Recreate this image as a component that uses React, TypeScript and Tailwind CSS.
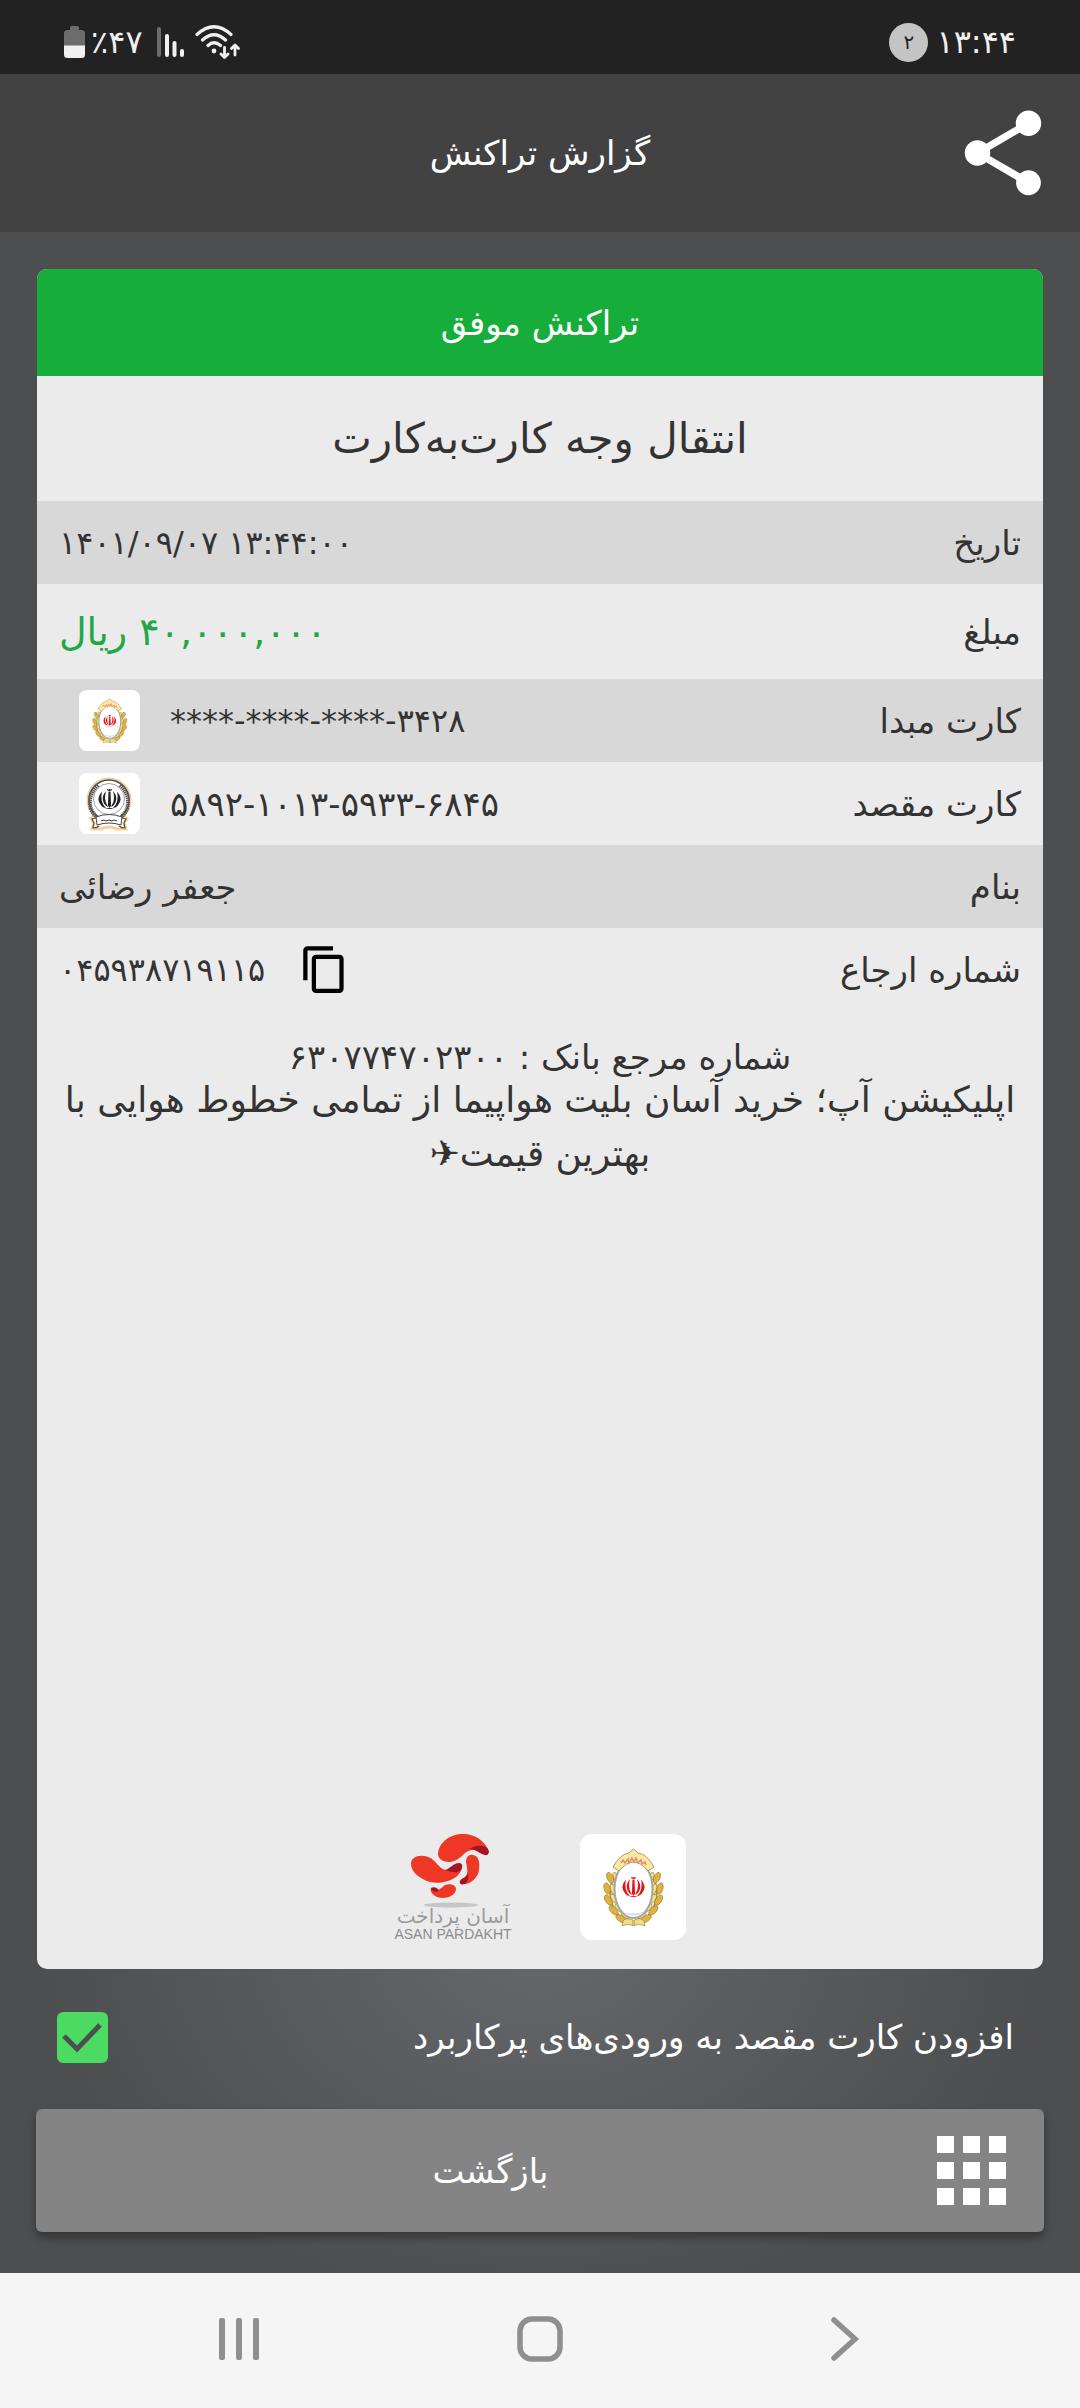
import React, { useState } from "react";
import { MdContentCopy, MdShare } from "react-icons/md";

function BatteryIcon() {
  return (
    <svg viewBox="0 0 21 32" className="h-8 w-[21px]" aria-hidden="true">
      <path d="M6 1.5Q6 0 7.500 0h6Q15 0 15 1.500V4h2.500Q21 4 21 7.500V20H0V7.500Q0 4 3.500 4H6z" fill="#6c6c6c" />
      <path d="M0 19.500h21V28.500Q21 32 17.500 32h-14Q0 32 0 28.500z" fill="#f0f0f0" />
    </svg>
  );
}

function SignalIcon() {
  return (
    <svg viewBox="0 0 28 31" className="h-[31px] w-7" aria-hidden="true">
      <rect x="0" y="0" width="4" height="30" rx="2" fill="#6c6c6c" />
      <rect x="8" y="7" width="4" height="23" rx="2" fill="#f0f0f0" />
      <rect x="15.500" y="14" width="4" height="16" rx="2" fill="#f0f0f0" />
      <rect x="23" y="22" width="4" height="8" rx="2" fill="#f0f0f0" />
    </svg>
  );
}

function WifiIcon() {
  return (
    <svg viewBox="0 0 46 34" className="h-[34px] w-[46px]" fill="none" stroke="#f0f0f0" strokeLinecap="round" aria-hidden="true">
      <path d="M2 9.500Q19 -6 36 9.500M7.500 15Q19 4.500 30.500 15M13 20.500Q19 15 25.500 20.500" strokeWidth="3.200" />
      <circle cx="19" cy="26" r="2.400" fill="#f0f0f0" stroke="none" />
      <path d="M29.500 22.500V32M26 29l3.500 3.500L33 29M40 30v-9.500M36.500 23.500L40 20l3.500 3.500" strokeWidth="2.800" strokeLinejoin="round" />
    </svg>
  );
}

interface EmblemProps {
  color: string;
}

// tulip-shaped "Allah" sign, 24x22 box
function Tulip({ color }: EmblemProps) {
  return (
    <g fill={color}>
      <path d="M11 3.500h2l.6 14L12 20l-1.600-2.500z" />
      <path d="M9 0.500q1.500 1.500 3 .5 1.500 1 3-.5-.5 2.500-3 2.500t-3-2.500z" />
      <path d="M8.500 3Q3 9 6.500 15.500q1.500 2.500 4 3.500-3-5-3-9 0-4 1-7z" />
      <path d="M15.500 3Q21 9 17.500 15.500q-1.500 2.500-4 3.500 3-5 3-9 0-4-1-7z" />
      <path d="M4.500 3.500Q-2.500 11 4 18q2 1.800 4.500 2.200Q2 13.500 4.500 3.500z" />
      <path d="M19.500 3.500Q26.500 11 20 18q-2 1.800-4.500 2.200 6.500-6.700 4-16.700z" />
      <path d="M7.500 21q4.500-2 9 0z" />
    </g>
  );
}

const leaves = [
  [8, 41, -25],
  [5, 52, -15],
  [6, 63, -32],
  [11, 73, -45],
  [18, 81, -58],
];

function MelliLogo({ className }: { className: string }) {
  return (
    <svg viewBox="0 0 106 106" className={className} aria-hidden="true">
      <g transform="translate(24 14)">
        {[0, 1].map((side) => (
          <g key={side} transform={side ? "translate(59 0) scale(-1 1)" : undefined} stroke="#8d7a3a" strokeWidth="0.600">
            <path d="M10 28Q1 50 14 67q6 7 15 9" fill="none" stroke="#a8924a" strokeWidth="2" />
            {leaves.map(([x, y, a]) => (
              <g key={y} transform={`translate(${x} ${y - 12}) rotate(${a})`}>
                <ellipse cx="-2" cy="0" rx="3" ry="5.800" fill="#e3b23c" />
                <ellipse cx="3.500" cy="2" rx="2.400" ry="5.200" fill="#f6e08a" />
              </g>
            ))}
            <path d="M29 72q-7-3-10 1l-1 5q7-3 11 0z" fill="#f0dc86" />
          </g>
        ))}
        <ellipse cx="29.500" cy="41" rx="19" ry="29" fill="#fff" stroke="#a5a5a5" strokeWidth="2" />
        <path d="M18 63q11 5 23 0-11 9-23 0z" fill="#dcdcdc" />
        <path d="M9 19Q16 6 25 5l4.500-4L34 5q9 1 16 14l-6 4Q29.500 5 15 23z" fill="#fae9a4" stroke="#b29b55" strokeWidth="1" />
        <path d="M17 15l2-3 2 3 3-4 1 4 3-5 2 4 2-4 2 5 3-3 1 4 3-2 1 3" fill="none" stroke="#e58b70" strokeWidth="1.500" />
        <g transform="translate(17.500 28)">
          <Tulip color="#e0161b" />
        </g>
      </g>
    </svg>
  );
}

function SepahLogo({ className }: { className: string }) {
  return (
    <svg viewBox="0 0 61 61" className={className} fill="none" aria-hidden="true">
      <circle cx="30" cy="27" r="21.500" stroke="#f6cf9d" strokeWidth="2" />
      <path d="M14 43l-2 3 3 4-2 6h9q8-4 16 0h9l-2-6 3-4-3-3z" fill="#fff" stroke="#f6cf9d" strokeWidth="3" />
      <circle cx="30" cy="27" r="20" fill="#fff" stroke="#4b4b4b" strokeWidth="1.400" />
      <path d="M19 12Q8 22 12 36q2 5 6 8M41 12q11 10 7 24-2 5-6 8" stroke="#555" strokeWidth="4" strokeDasharray="1.500 0.600" />
      <circle cx="30" cy="26" r="15.500" stroke="#777" strokeWidth="0.700" />
      <g transform="translate(18.500 15)">
        <Tulip color="#242424" />
      </g>
      <path d="M17 44q13-5 26 0l-1 8q-12-4-24 0z" fill="#fff" stroke="#444" />
      <path d="M17 45l-4 1 2 4-1 5q4 0 6-2M43 45l4 1-2 4 1 5q-4 0-6-2" stroke="#555" strokeWidth="1.200" />
      <path d="M22 48l3-1 2 1 3-1 3 1 2-1 3 1" stroke="#333" />
    </svg>
  );
}

function AsanPardakhtLogo() {
  return (
    <svg viewBox="0 0 118 106" className="h-[106px] w-[118px] overflow-visible" role="img" aria-label="آسان پرداخت">
      <path d="M44 20C45 8 56 0 69 0c13 0 23 8 26 18-1 3-4 3-7 1-6-4-13-4-18 1-4 4-9 8-15 8-7 0-11-4-11-8z" fill="#ee3724" />
      <path d="M76 15c5-4 13-4 17-1 3 3 2 8-2 7-5-1-9-6-15-6z" fill="#a31621" />
      <path d="M17 30c0-6 6-9 13-8 12 1 14 14 23 14 6 0 8-5 13-6 4 2 1 9-4 13-7 5-18 7-26 5-10-3-19-10-19-18z" fill="#ee3724" />
      <path d="M51 36c5-1 8-7 14-7 4 0 4 4 2 7-4 4-11 2-16 0z" fill="#a31621" />
      <path d="M72 28c0-5 3-8 7-7 6 1 7 8 6 15-1 8-9 14-14 14-6 0-4-4-1-6 5-4 3-10 2-16z" fill="#ee3724" />
      <path d="M66 47c1-3 6-3 8-7 1 3 0 8-3 10-4 1-6 0-5-3z" fill="#a31621" />
      <path d="M37 54c5 6 10 0 14-3 5-2 11 0 11 4 0 6-8 9-13 9-7 0-14-5-12-10z" fill="#ee3724" />
      <path d="M37 54c3-2 7 0 8 3-3 2-8 0-8-3z" fill="#a31621" />
      <ellipse cx="57" cy="71" rx="27" ry="2.500" fill="#c5c6c8" />
      <text x="59" y="89" textAnchor="middle" direction="rtl" fontSize="20" fill="#9a9b9d" fontFamily="DejaVu Sans, sans-serif">آسان پرداخت</text>
      <text x="59" y="105" textAnchor="middle" fontSize="14" fill="#8b8c8e" fontFamily="Liberation Sans, sans-serif">ASAN PARDAKHT</text>
    </svg>
  );
}

function AppsIcon() {
  return (
    <svg viewBox="0 0 70 70" className="size-[70px]" fill="#fff" aria-hidden="true">
      {[0, 26, 52].map((y) => [0, 26, 52].map((x) => <rect key={`${x}-${y}`} x={x} y={y} width="17" height="17" />))}
    </svg>
  );
}

interface RowProps {
  label: string;
  shaded?: boolean;
  children: React.ReactNode;
}

function Row({ label, shaded, children }: RowProps) {
  return (
    <div className={`flex min-h-[83px] items-center justify-between px-[22px] ${shaded ? "bg-[#d8d8d8]" : ""}`}>
      <dt>{label}</dt>
      <dd className="flex items-center">{children}</dd>
    </div>
  );
}

export default function App() {
  const [saveCard, setSaveCard] = useState(true);

  return (
    <div dir="rtl" className="flex min-h-screen flex-col bg-[#4d4e50] font-['DejaVu_Sans',sans-serif] text-[34px] leading-[42px] text-[#333]">
      <div dir="ltr" className="flex h-[74px] items-center justify-between bg-[#222] px-[64px] pt-[10px] text-[32px] text-[#f0f0f0]">
        <div className="flex items-center">
          <BatteryIcon />
          <span className="ml-[6px]">٪۴۷</span>
          <span className="ml-[14px]">
            <SignalIcon />
          </span>
          <span className="ml-[10px]">
            <WifiIcon />
          </span>
        </div>
        <div className="flex items-center gap-2">
          <span className="flex size-[39px] items-center justify-center rounded-full bg-[#c4c4c4] text-[20px] text-[#222]">۲</span>
          <span>۱۳:۴۴</span>
        </div>
      </div>

      <header className="grid h-[158px] grid-cols-[102px_1fr_102px] items-center bg-[#424242] px-[26px] text-white">
        <button type="button" aria-label="اشتراک‌گذاری">
          <MdShare className="size-[102px]" />
        </button>
        <h1 className="text-center">گزارش تراکنش</h1>
      </header>

      <main className="flex flex-1 flex-col bg-[radial-gradient(500px_360px_at_50%_84%,#66676a,#4d4e50)] px-9 pt-[37px] pb-[41px]">
        <section className="mx-px flex flex-1 flex-col overflow-hidden rounded-[10px] bg-[#ebebeb]">
          <div className="flex h-[107px] items-center justify-center bg-[#16ad3b] text-white">تراکنش موفق</div>
          <h2 className="flex h-[125px] items-center justify-center text-[42px]">انتقال وجه کارت‌به‌کارت</h2>

          <dl>
            <Row label="تاریخ" shaded>
              <span dir="ltr" className="text-[32px]">
                ۱۴۰۱/۰۹/۰۷ ۱۳:۴۴:۰۰
              </span>
            </Row>
            <div className="flex min-h-[95px] items-center justify-between px-[22px]">
              <dt>مبلغ</dt>
              <dd className="text-[38px] text-[#22a745]">۴۰,۰۰۰,۰۰۰ ریال</dd>
            </div>
            <Row label="کارت مبدا" shaded>
              <span dir="ltr" className="text-[32px]">
                ****-****-****-۳۴۲۸
              </span>
              <span className="mr-[30px] ml-5 rounded-lg bg-white">
                <MelliLogo className="size-[61px]" />
              </span>
            </Row>
            <Row label="کارت مقصد">
              <span dir="ltr">۵۸۹۲-۱۰۱۳-۵۹۳۳-۶۸۴۵</span>
              <span className="mr-[30px] ml-5 rounded-lg bg-white">
                <SepahLogo className="size-[61px]" />
              </span>
            </Row>
            <Row label="بنام" shaded>
              جعفر رضائی
            </Row>
            <Row label="شماره ارجاع">
              <button type="button" aria-label="کپی" className="ml-[34px] text-black">
                <MdContentCopy className="size-[51px]" />
              </button>
              <span dir="ltr" className="text-[32px]">
                ۰۴۵۹۳۸۷۱۹۱۱۵
              </span>
            </Row>
          </dl>

          <div className="px-6 pt-[30px] text-center">
            <p className="leading-8">شماره مرجع بانک : ۶۳۰۷۷۴۷۰۲۳۰۰</p>
            <p className="text-[36px] leading-[54px]">اپلیکیشن آپ؛ خرید آسان بلیت هواپیما از تمامی خطوط هوایی با بهترین قیمت✈</p>
          </div>

          <div className="mt-auto flex items-center justify-center gap-[68px] pb-[29px]">
            <span className="rounded-xl bg-white">
              <MelliLogo className="size-[106px]" />
            </span>
            <AsanPardakhtLogo />
          </div>
        </section>

        <label className="flex h-[140px] items-center justify-between pr-[30px] pb-1 pl-[21px] text-white">
          افزودن کارت مقصد به ورودی‌های پرکاربرد
          <span className="grid">
            <input
              type="checkbox"
              checked={saveCard}
              onChange={(e) => setSaveCard(e.target.checked)}
              className="col-start-1 row-start-1 size-[51px] appearance-none rounded-md border-4 border-[#4cdb62] checked:bg-[#4cdb62]"
            />
            {saveCard && (
              <svg viewBox="0 0 51 51" className="pointer-events-none col-start-1 row-start-1 size-[51px]" fill="none" stroke="#4d4e50" strokeWidth="5" aria-hidden="true">
                <path d="M7 24l13 13L43 13" />
              </svg>
            )}
          </span>
        </label>

        <button type="button" className="flex h-[123px] items-center rounded-md bg-[#848484] pr-[37px] pl-2 text-white shadow-[0_5px_10px_rgba(0,0,0,0.35)]">
          <AppsIcon />
          <span className="flex-1">بازگشت</span>
        </button>
      </main>

      <nav dir="ltr" className="grid h-[135px] grid-cols-3 place-items-center bg-[#f5f5f5] px-[88px] pb-1 text-[#8f8f8f]">
        <button type="button" aria-label="برنامه‌های اخیر">
          <svg viewBox="0 0 46 46" className="size-[46px]" fill="currentColor">
            <rect x="3" y="2" width="6" height="42" rx="2" />
            <rect x="20" y="2" width="6" height="42" rx="2" />
            <rect x="37" y="2" width="6" height="42" rx="2" />
          </svg>
        </button>
        <button type="button" aria-label="خانه">
          <svg viewBox="0 0 46 46" className="size-[46px]" fill="none" stroke="currentColor" strokeWidth="5.500">
            <rect x="3" y="3" width="40" height="40" rx="12" />
          </svg>
        </button>
        <button type="button" aria-label="بازگشت">
          <svg viewBox="0 0 46 46" className="size-[46px]" fill="none" stroke="currentColor" strokeWidth="5.500" strokeLinecap="round">
            <path d="M16 4l21 19-21 19" />
          </svg>
        </button>
      </nav>
    </div>
  );
}
